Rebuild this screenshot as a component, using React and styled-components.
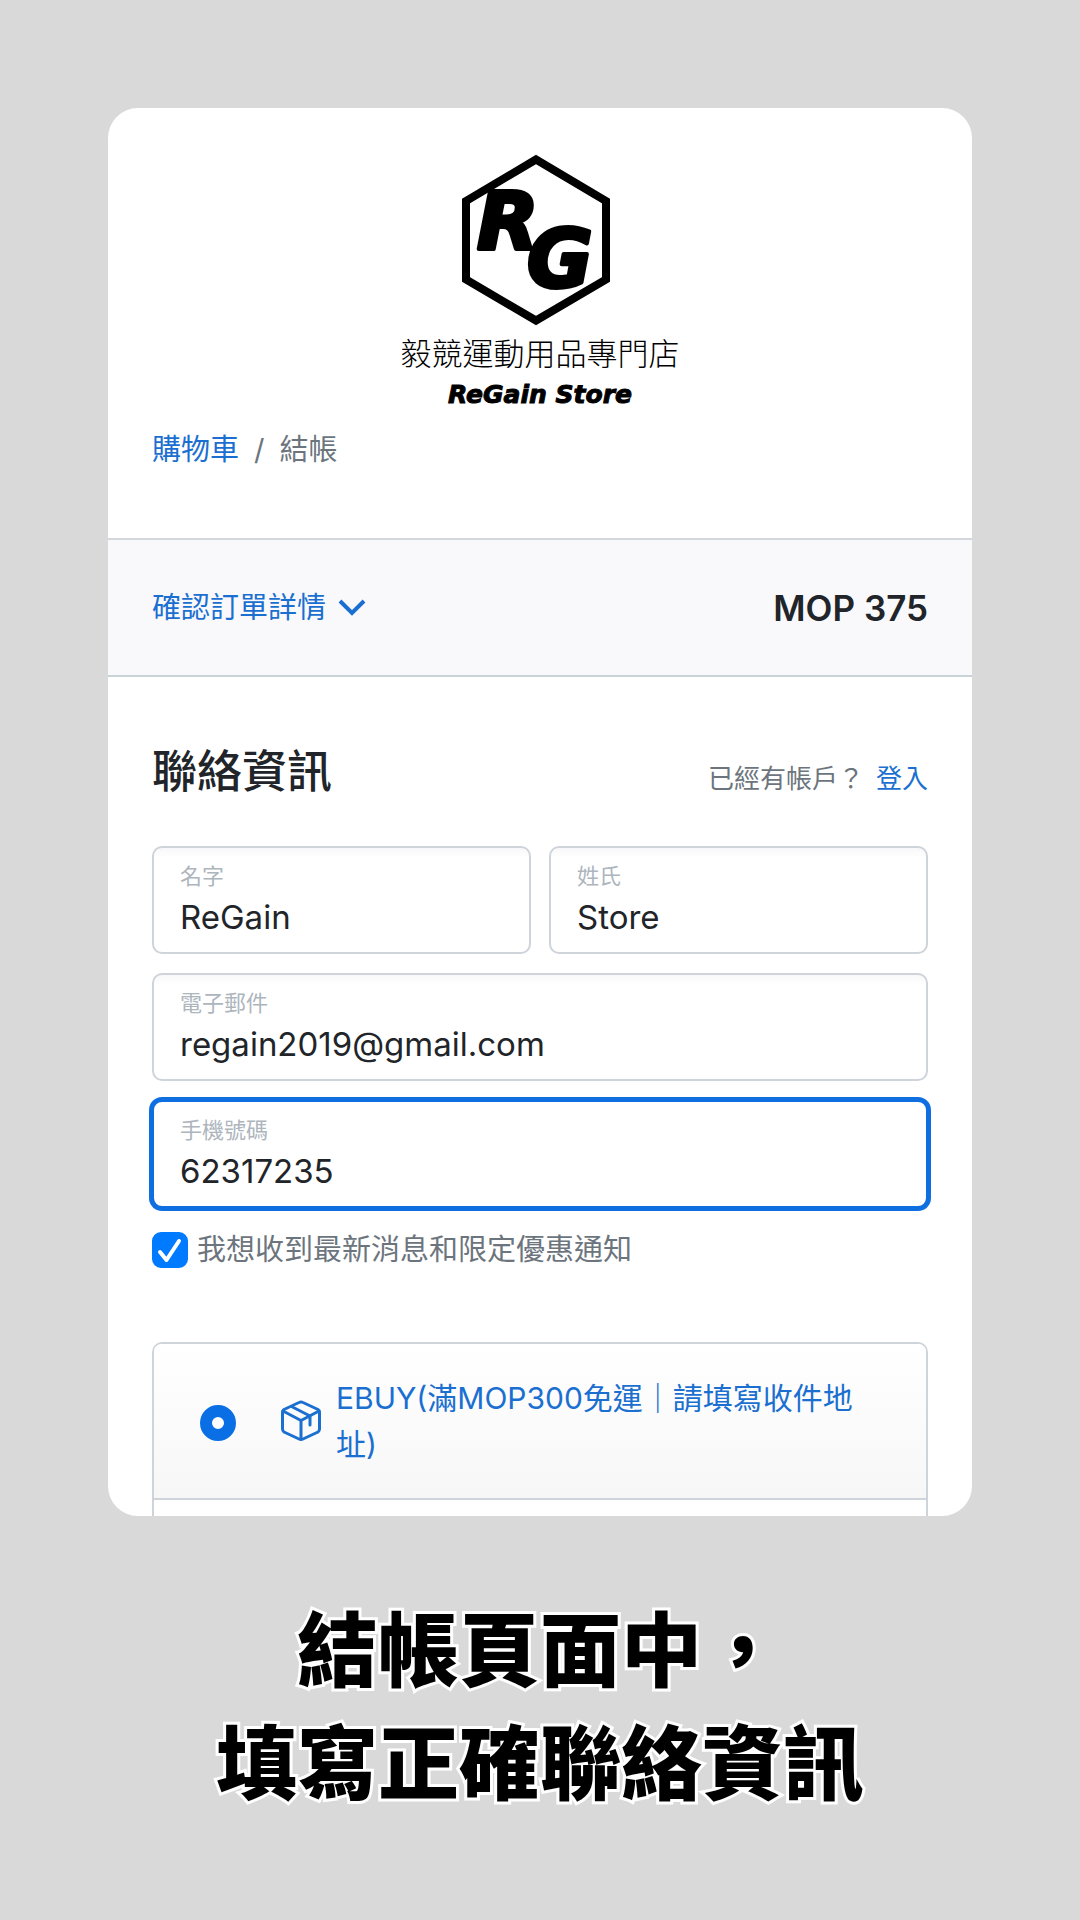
import React, { useState } from "react";
import styled, { createGlobalStyle } from "styled-components";

const GlobalStyle = createGlobalStyle`
  * {
    box-sizing: border-box;
  }

  body {
    margin: 0;
    background: #d9d9d9;
    color: #212529;
    font-family: Inter, "Noto Sans CJK TC", sans-serif;
    font-size: 29px;
  }
`;

const Page = styled.main`
  padding: 108px 10% 90px;
`;

const Card = styled.section`
  overflow: hidden;
  border-radius: 30px;
  background: #ffffff;
`;

const Header = styled.header`
  padding: 46px 44px 66px;
`;

const Brand = styled.div`
  display: flex;
  flex-direction: column;
  align-items: center;
  color: #000000;
`;

const LogoMark = styled.svg`
  display: block;
  width: 148px;
  height: 172px;
  margin-right: 9px;
`;

const LogoLetter = styled.text`
  font-family: "DejaVu Sans", sans-serif;
  font-size: 80px;
  font-style: italic;
  font-weight: 700;
  stroke: #000000;
  stroke-width: 4;
  stroke-linejoin: round;
`;

const BrandName = styled.h1`
  margin: 4px 0 0;
  font-size: 31px;
  font-weight: 300;
  line-height: 48px;
`;

const BrandLatin = styled.p`
  margin: 0;
  font-family: "DejaVu Sans", sans-serif;
  font-size: 25px;
  font-style: italic;
  font-weight: 700;
  line-height: 34px;
  -webkit-text-stroke: 1px #000000;
`;

const Breadcrumb = styled.nav`
  display: flex;
  gap: 15px;
  margin-top: 16px;
  color: #6c757d;
  line-height: 44px;
`;

const TextLink = styled.a`
  color: #1a6fd0;
  text-decoration: none;
`;

const Summary = styled.section`
  display: flex;
  align-items: center;
  justify-content: space-between;
  padding: 46px 44px 45px;
  border-top: 2px solid #d3d6da;
  border-bottom: 2px solid #cad3d7;
  background: #f9f9fb;
`;

const SummaryToggle = styled.button`
  display: flex;
  align-items: center;
  gap: 12px;
  padding: 0;
  border: 0;
  background: none;
  color: #1a6fd0;
  font: inherit;
  line-height: 44px;
  cursor: pointer;
`;

const Total = styled.strong`
  font-size: 35px;
  font-weight: 600;
  line-height: 44px;
`;

const Form = styled.form`
  padding: 61px 44px 0;
`;

const FormHeader = styled.div`
  display: flex;
  align-items: flex-end;
  justify-content: space-between;
  margin-bottom: 40px;
`;

const FormTitle = styled.h2`
  margin: 0;
  font-size: 45px;
  font-weight: 500;
  line-height: 68px;
`;

const Account = styled.p`
  display: flex;
  gap: 12px;
  margin: 0;
  color: #6c757d;
  font-size: 26px;
  line-height: 54px;
`;

const Fields = styled.div`
  display: grid;
  grid-template-columns: 1fr 1fr;
  gap: 19px 18px;
`;

const Field = styled.label`
  display: flex;
  flex-direction: column;
  grid-column: ${(props) => (props.$wide ? "1 / -1" : "auto")};
  padding: 12px 26px 10px;
  border: 2px solid #ced4da;
  border-radius: 10px;
  background: linear-gradient(#f8f8fa, #ffffff 10px);

  &:has(input:focus) {
    border-color: #0f6fe0;
    background: #ffffff;
    box-shadow: 0 0 0 3px #0f6fe0;
  }
`;

const FieldLabel = styled.span`
  color: #adb5bd;
  font-size: 22px;
  line-height: 32px;
`;

const FieldInput = styled.input`
  width: 100%;
  height: 50px;
  padding: 0;
  border: 0;
  outline: 0;
  background: none;
  color: #212529;
  caret-color: transparent;
  font-family: inherit;
  font-size: 33px;
`;

const Subscribe = styled.label`
  display: flex;
  align-items: center;
  gap: 9px;
  margin-top: 20px;
  color: #6c757d;
  line-height: 44px;
`;

const Tick = styled.span`
  display: grid;

  > * {
    grid-area: 1 / 1;
  }

  svg {
    pointer-events: none;
  }
`;

const TickInput = styled.input`
  appearance: none;
  width: 36px;
  height: 36px;
  margin: 0;
  border: 2px solid #ced4da;
  border-radius: 9px;

  &:checked {
    border-color: #007aff;
    background: #007aff;
  }
`;

const Delivery = styled.div`
  margin-top: 70px;
  border: 2px solid #ced4da;
  border-bottom: 0;
  border-radius: 10px 10px 0 0;
`;

const DeliveryOption = styled.label`
  display: flex;
  align-items: center;
  padding: 31px 64px 31px 46px;
  border-bottom: 2px solid #ced4da;
  border-radius: 8px 8px 0 0;
  background: linear-gradient(#ffffff, #f7f7f8);
  color: #1a6fd0;
  font-size: 30px;
  line-height: 46px;
`;

const Radio = styled.input`
  appearance: none;
  flex: none;
  width: 36px;
  height: 36px;
  margin: 4px 44px 0 0;
  border: 2px solid #ced4da;
  border-radius: 50%;
  background: #ffffff;

  &:checked {
    border: 12px solid #0a6fe4;
  }
`;

const BoxIcon = styled.svg`
  flex: none;
  margin-right: 14px;
`;

const DeliveryBody = styled.div`
  height: 16px;
`;

const Caption = styled.p`
  margin: 79px 0 0;
  color: #000000;
  font-size: 81px;
  font-weight: 900;
  line-height: 113px;
  text-align: center;
  paint-order: stroke fill;
  -webkit-text-stroke: 6px #ffffff;
  stroke-linejoin: round;
`;

const Logo = () => (
  <LogoMark viewBox="0 0 148 172" role="img" aria-label="RG">
    <path
      d="M74 5.500L144 47V125.500L74 166.500L4 125.500V47Z"
      fill="none"
      stroke="currentColor"
      strokeWidth="8"
    />
    <LogoLetter x="15" y="95">
      R
    </LogoLetter>
    <LogoLetter x="65" y="133">
      G
    </LogoLetter>
  </LogoMark>
);

const fields = [
  { id: "firstName", label: "名字", type: "text" },
  { id: "lastName", label: "姓氏", type: "text" },
  { id: "email", label: "電子郵件", type: "email", wide: true },
  { id: "phone", label: "手機號碼", type: "tel", wide: true },
];

const App = () => {
  const [values, setValues] = useState({
    firstName: "ReGain",
    lastName: "Store",
    email: "regain2019@gmail.com",
    phone: "62317235",
  });

  const handleChange = (e) => {
    setValues({ ...values, [e.target.name]: e.target.value });
  };

  return (
    <>
      <GlobalStyle />
      <Page>
        <Card>
          <Header>
            <Brand>
              <Logo />
              <BrandName>毅競運動用品專門店</BrandName>
              <BrandLatin>ReGain Store</BrandLatin>
            </Brand>
            <Breadcrumb>
              <TextLink href="#cart">購物車</TextLink>
              <span>/</span>
              <span>結帳</span>
            </Breadcrumb>
          </Header>
          <Summary>
            <SummaryToggle type="button">
              確認訂單詳情
              <svg width="28" height="20" viewBox="0 0 28 20" fill="none">
                <path d="M2 3L14 15L26 3" stroke="currentColor" strokeWidth="4" />
              </svg>
            </SummaryToggle>
            <Total>MOP 375</Total>
          </Summary>
          <Form onSubmit={(e) => e.preventDefault()}>
            <FormHeader>
              <FormTitle>聯絡資訊</FormTitle>
              <Account>
                <span>已經有帳戶？</span>
                <TextLink href="#login">登入</TextLink>
              </Account>
            </FormHeader>
            <Fields>
              {fields.map((field) => (
                <Field key={field.id} htmlFor={field.id} $wide={field.wide}>
                  <FieldLabel>{field.label}</FieldLabel>
                  <FieldInput
                    id={field.id}
                    name={field.id}
                    type={field.type}
                    value={values[field.id]}
                    onChange={handleChange}
                    autoFocus={field.id === "phone"}
                  />
                </Field>
              ))}
            </Fields>
            <Subscribe htmlFor="subscribe">
              <Tick>
                <TickInput id="subscribe" type="checkbox" defaultChecked />
                <svg width="36" height="36" viewBox="0 0 36 36" fill="none">
                  <path
                    d="M8 20L14.500 28L27 9"
                    stroke="#ffffff"
                    strokeWidth="4"
                    strokeLinecap="round"
                    strokeLinejoin="round"
                  />
                </svg>
              </Tick>
              我想收到最新消息和限定優惠通知
            </Subscribe>
            <Delivery>
              <DeliveryOption htmlFor="ebuy">
                <Radio id="ebuy" type="radio" name="delivery" defaultChecked />
                <BoxIcon
                  width="42"
                  height="42"
                  viewBox="0 0 42 42"
                  fill="none"
                  stroke="currentColor"
                  strokeWidth="3"
                  strokeLinejoin="round"
                  strokeLinecap="round"
                >
                  <path d="M19 2.500Q21 1.500 23 2.500L38 9.500Q39.500 10.500 39.500 12V29Q39.500 31 38 32L23 39Q21 40 19 39L4 32Q2.500 31 2.500 29V12Q2.500 10.500 4 9.500Z" />
                  <path d="M3 11L21 20.500L39 11M21 20.500V39" />
                  <path d="M11.500 6.500L30 16V25" />
                </BoxIcon>
                <span>EBUY(滿MOP300免運｜請填寫收件地址)</span>
              </DeliveryOption>
              <DeliveryBody />
            </Delivery>
          </Form>
        </Card>
        <Caption>
          結帳頁面中，
          <br />
          填寫正確聯絡資訊
        </Caption>
      </Page>
    </>
  );
};

export default App;
